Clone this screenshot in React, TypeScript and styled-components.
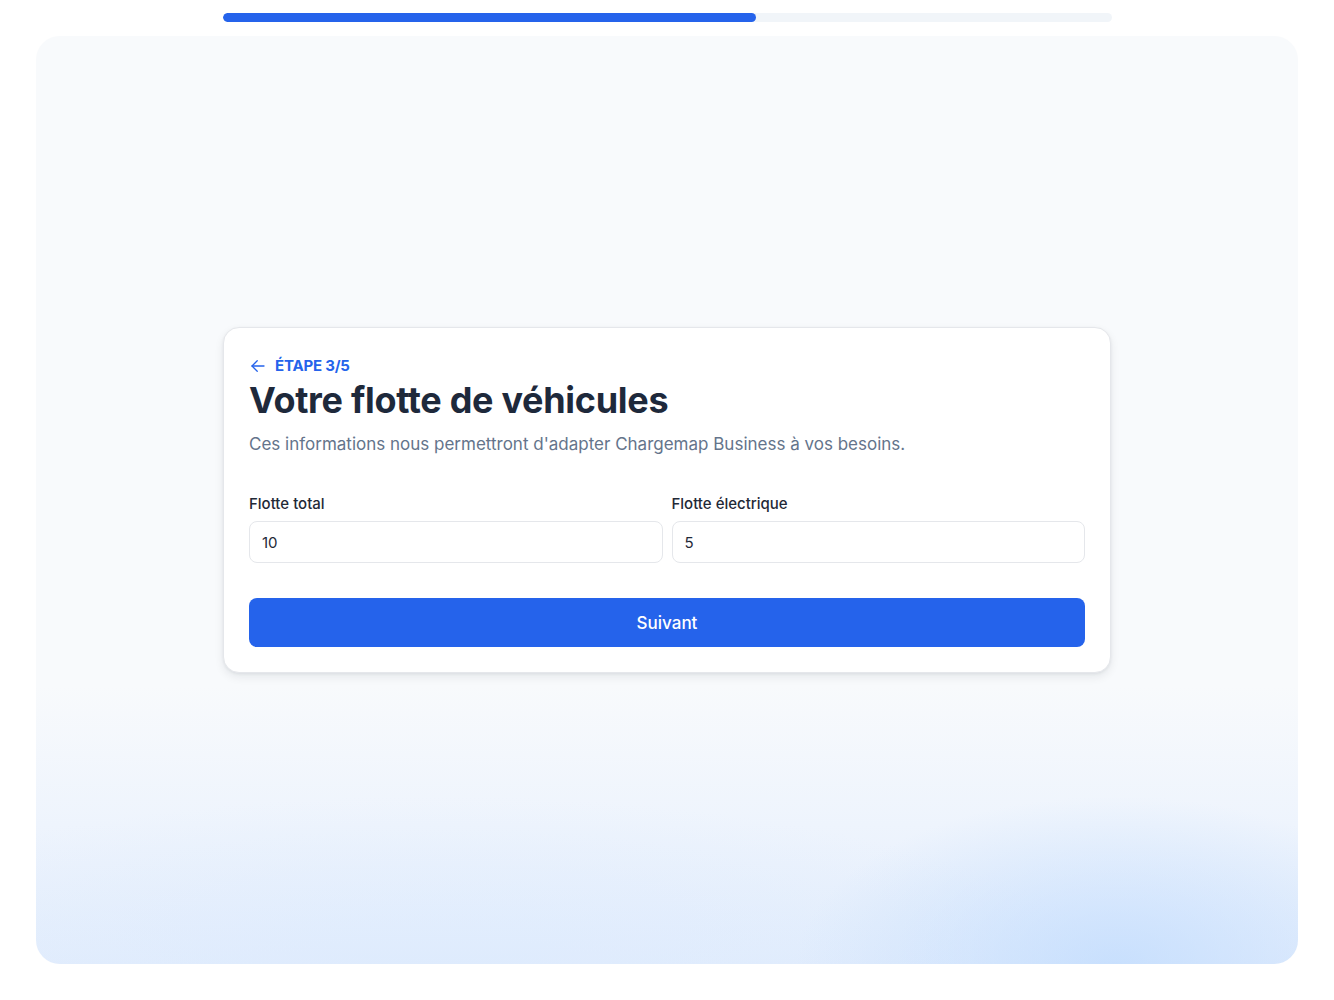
import React from 'react'
import styled, { createGlobalStyle } from 'styled-components'

const GlobalStyle = createGlobalStyle`
  html, body {
    margin: 0;
    padding: 0;
    background: #ffffff;
    font-family: Inter, "Noto Sans", sans-serif;
    -webkit-font-smoothing: antialiased;
  }
  * {
    box-sizing: border-box;
  }
`

const Page = styled.div`
  display: flex;
  flex-direction: column;
  align-items: center;
  gap: 14px;
  padding: 13px 36px 36px;
  min-height: 1000px;
`

const ProgressTrack = styled.div`
  width: 889px;
  height: 9px;
  border-radius: 999px;
  background: #f1f5f9;
  overflow: hidden;
`

const ProgressFill = styled.div`
  height: 100%;
  border-radius: 999px;
  background: #2563eb;
`

const Panel = styled.main`
  width: 100%;
  height: 928px;
  border-radius: 24px;
  display: flex;
  align-items: center;
  justify-content: center;
  background:
    radial-gradient(ellipse 320px 170px at 1080px 930px, rgba(191, 219, 254, 0.75), rgba(191, 219, 254, 0) 100%),
    radial-gradient(ellipse 700px 200px at 400px 960px, rgba(219, 234, 254, 0.7), rgba(219, 234, 254, 0) 100%),
    linear-gradient(180deg, #f8fafc 0%, #f8fafc 70%, #eef4fd 85%, #e3edfc 100%);
`

const Card = styled.section`
  width: 888px;
  background: #ffffff;
  border: 1px solid #e5e7eb;
  border-radius: 16px;
  padding: 27px 25px 25px;
  box-shadow: 0 4px 10px rgba(15, 23, 42, 0.08), 0 1px 3px rgba(15, 23, 42, 0.06);
`

const StepLink = styled.div`
  display: flex;
  align-items: center;
  gap: 8px;
  color: #2563eb;
  font-size: 15px;
  font-weight: 700;
  letter-spacing: -0.2px;
  line-height: 22px;
  text-transform: uppercase;

  svg {
    width: 18px;
    height: 18px;
  }
`

const Title = styled.h1`
  margin: 1px 0 0;
  font-size: 36px;
  line-height: 44px;
  font-weight: 700;
  letter-spacing: -0.3px;
  color: #1e293b;
`

const Subtitle = styled.p`
  margin: 9px 0 0;
  font-size: 17px;
  line-height: 26px;
  color: #64748b;
`

const Fields = styled.div`
  display: grid;
  grid-template-columns: 1fr 1fr;
  gap: 9px;
  margin-top: 37px;
`

const Field = styled.label`
  display: flex;
  flex-direction: column;
  gap: 7px;
`

const LabelText = styled.span`
  font-size: 15px;
  line-height: 20px;
  font-weight: 500;
  color: #1f2937;
`

const Input = styled.input`
  height: 42px;
  width: 100%;
  padding: 0 12px;
  border: 1.5px solid #e5e7eb;
  border-radius: 8px;
  font-family: inherit;
  font-size: 15px;
  color: #1f2937;
  background: #ffffff;
  outline: none;
`

const SubmitButton = styled.button`
  width: 100%;
  height: 49px;
  margin-top: 35px;
  border: none;
  border-radius: 8px;
  background: #2563eb;
  color: #ffffff;
  font-family: inherit;
  font-size: 17px;
  font-weight: 500;
  cursor: pointer;
`

const App = () => {
  const progress = 60
  return (
    <>
      <GlobalStyle />
      <Page>
        <ProgressTrack>
          <ProgressFill style={{ width: `${progress}%` }} />
        </ProgressTrack>
        <Panel>
          <Card>
            <StepLink>
              <svg viewBox="0 0 24 24" fill="none" stroke="currentColor" strokeWidth="1.7" strokeLinecap="round" strokeLinejoin="round">
                <path d="M20 12H4" />
                <path d="M11 19l-7-7 7-7" />
              </svg>
              Étape 3/5
            </StepLink>
            <Title>Votre flotte de véhicules</Title>
            <Subtitle>Ces informations nous permettront d'adapter Chargemap Business à vos besoins.</Subtitle>
            <Fields>
              <Field>
                <LabelText>Flotte total</LabelText>
                <Input defaultValue="10" />
              </Field>
              <Field>
                <LabelText>Flotte électrique</LabelText>
                <Input defaultValue="5" />
              </Field>
            </Fields>
            <SubmitButton>Suivant</SubmitButton>
          </Card>
        </Panel>
      </Page>
    </>
  )
}

export default App
